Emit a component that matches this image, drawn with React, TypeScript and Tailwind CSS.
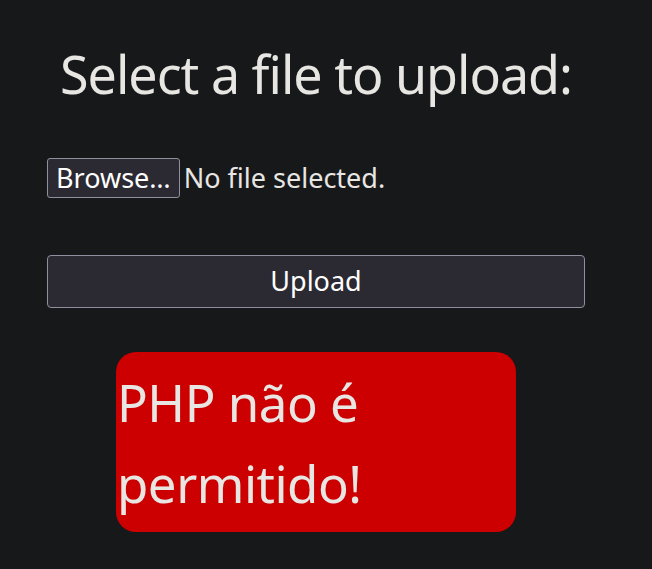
export default function App() {
    return (
        <div className="min-h-[569px] bg-[#17181a] text-[#e8e6e3] font-['Noto_Sans',sans-serif]">
            <div className="ml-[47px] w-[538px] pt-[46px]">
                <h1 className="text-center text-[52px] leading-[56px] tracking-[-1px]">Select a file to upload:</h1>

                <div className="mt-[56px] flex items-center">
                    <span className="flex h-[40px] items-center rounded-[3px] border border-[#8f8f9d] bg-[#2b2a33] px-[8px] text-[27px] text-white">
                        Browse…
                    </span>
                    <span className="ml-[4px] text-[27px]">No file selected.</span>
                </div>

                <button className="mt-[56px] flex h-[53px] w-full items-center justify-center rounded-[4px] border border-[#8f8f9d] bg-[#2b2a33] text-[27px] text-white">
                    Upload
                </button>

                <div className="mx-auto mt-[44px] h-[180px] w-[400px] rounded-[20px] bg-[#cc0000] pl-[1px] pt-[10px] text-[51px] leading-[81px] tracking-[-0.5px]">
                    PHP não é permitido!
                </div>
            </div>
        </div>
    );
}
